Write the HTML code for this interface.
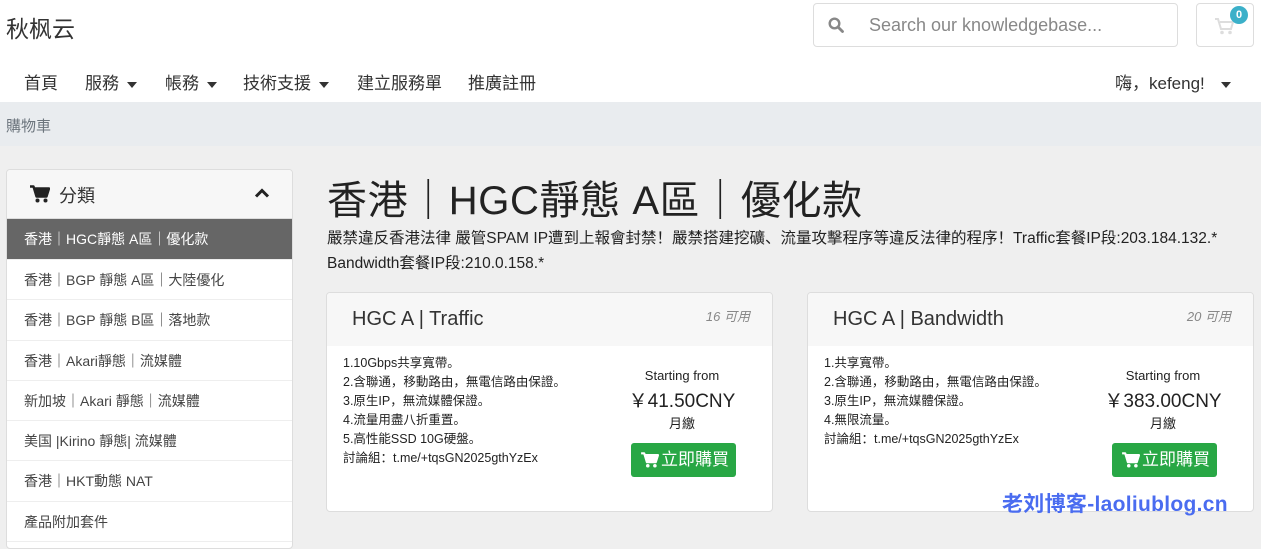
<!DOCTYPE html>
<html><head><meta charset="utf-8"><style>
*{box-sizing:border-box;margin:0;padding:0}
body{width:1261px;height:538px;overflow:hidden;background:#efefef;font-family:"Liberation Sans","Noto Sans CJK SC",sans-serif;color:#333;position:relative}
.abs{position:absolute}
.hdr{left:0;top:0;width:1261px;height:102px;background:#fff}
.logo{left:6px;top:10px;font-size:23px;color:#333}
.search{left:813px;top:3px;width:365px;height:44px;border:1px solid #ddd;border-radius:4px;background:#fff}
.search span{position:absolute;left:55px;top:11px;font-size:18px;color:#888}
.cart{left:1196px;top:3px;width:58px;height:44px;border:1px solid #ddd;border-radius:4px;background:#fff}
.badge{left:1230px;top:6px;width:18px;height:18px;border-radius:9px;background:#3bb0c9;color:#fff;font-size:11px;font-weight:bold;text-align:center;line-height:18px}
.nav{top:69px;font-size:17px;color:#333}
.caret{display:inline-block;width:0;height:0;border-left:5px solid transparent;border-right:5px solid transparent;border-top:6px solid #333;vertical-align:middle;margin-left:8px}
.bc{left:0;top:102px;width:1261px;height:44px;background:#e9ecef}
.bc span{position:absolute;left:6px;top:13px;font-size:15px;color:#6c757d}
.side{left:6px;top:169px;width:287px;height:380px;background:#fff;border:1px solid #ddd;border-radius:4px;overflow:hidden}
.sh{height:49px;background:#f7f7f7;border-bottom:1px solid #ddd;position:relative;font-size:18px}
.si{height:40.3px;border-bottom:1px solid #eee;font-size:14px;padding-left:17px;line-height:40px;color:#444}
.si.act{background:#666;color:#fff;height:41px}
h1{position:absolute;left:327px;top:168px;font-size:40px;letter-spacing:0.6px;font-weight:normal;color:#222;white-space:nowrap}
.desc{left:327px;top:226px;font-size:15.5px;line-height:25px;color:#222;width:925px}
.card{width:447px;height:220px;background:#fff;border:1px solid #ddd;border-radius:4px;top:292px;overflow:hidden}
.ch{height:53px;background:#f7f7f7;position:relative}
.ch .t{position:absolute;left:25px;top:15px;font-size:20px;color:#333}
.ch .q{position:absolute;right:22px;top:13px;font-size:13px;font-style:italic;color:#888}
.feat{position:absolute;left:16px;top:61px;font-size:12.5px;line-height:19px;color:#222}
.pr{position:absolute;left:290px;width:130px;top:75px;text-align:center;color:#222}
.btn{position:absolute;left:304px;top:150px;width:105px;height:34px;background:#28a745;border-radius:3px;color:#fff;font-size:17px;line-height:34px;padding-left:30px}
.btn svg{position:absolute;left:10px;top:9px}
</style></head><body>
<div class="abs hdr"></div>
<div class="abs logo">秋枫云</div>
<div class="abs search"><svg style="position:absolute;left:14px;top:13px" width="16" height="16" viewBox="0 0 16 16"><circle cx="6.5" cy="6.5" r="4.8" fill="none" stroke="#888" stroke-width="2.4"/><path d="M10 10l4.5 4.5" stroke="#888" stroke-width="2.8" stroke-linecap="round"/></svg><span>Search our knowledgebase...</span></div>
<div class="abs cart"><svg style="position:absolute;left:18px;top:14px" width="20" height="17" viewBox="0 0 20 17"><path d="M0 1h3l3 10h10l2-7H5" fill="none" stroke="#ddd" stroke-width="2"/><circle cx="7" cy="14.5" r="1.8" fill="#ddd"/><circle cx="15" cy="14.5" r="1.8" fill="#ddd"/></svg></div>
<div class="abs badge">0</div>
<div class="abs nav" style="left:24px">首頁</div>
<div class="abs nav" style="left:85px">服務<span class="caret"></span></div>
<div class="abs nav" style="left:165px">帳務<span class="caret"></span></div>
<div class="abs nav" style="left:243px">技術支援<span class="caret"></span></div>
<div class="abs nav" style="left:357px">建立服務單</div>
<div class="abs nav" style="left:468px">推廣註冊</div>
<div class="abs nav" style="left:1115px">嗨，kefeng!<span class="caret" style="margin-left:16px"></span></div>
<div class="abs bc"><span>購物車</span></div>
<div class="abs side">
<div class="sh"><svg style="position:absolute;left:23px;top:15px" width="20" height="18" viewBox="0 0 20 18"><path d="M0 1.5h3.5l3 10h10l2.5-8H5" fill="#222" stroke="#222" stroke-width="2.4" stroke-linejoin="round"/><circle cx="7.5" cy="15.5" r="2" fill="#222"/><circle cx="15.5" cy="15.5" r="2" fill="#222"/></svg><span style="position:absolute;left:52px;top:12px">分類</span><svg style="position:absolute;left:247px;top:18px" width="16" height="10" viewBox="0 0 16 10"><path d="M2 8.5L8 2.5l6 6" fill="none" stroke="#222" stroke-width="3"/></svg></div>
<div class="si act">香港｜HGC靜態 A區｜優化款</div>
<div class="si">香港｜BGP 靜態 A區｜大陸優化</div>
<div class="si">香港｜BGP 靜態 B區｜落地款</div>
<div class="si">香港｜Akari靜態｜流媒體</div>
<div class="si">新加坡｜Akari 靜態｜流媒體</div>
<div class="si">美国 |Kirino 靜態| 流媒體</div>
<div class="si">香港｜HKT動態 NAT</div>
<div class="si">產品附加套件</div>
</div>
<h1>香港｜HGC靜態 A區｜優化款</h1>
<div class="abs desc">嚴禁違反香港法律 嚴管SPAM IP遭到上報會封禁！嚴禁搭建挖礦、流量攻擊程序等違反法律的程序！Traffic套餐IP段:203.184.132.* Bandwidth套餐IP段:210.0.158.*</div>
<div class="abs card" style="left:326px">
<div class="ch"><span class="t">HGC A | Traffic</span><span class="q">16 可用</span></div>
<div class="feat">1.10Gbps共享寬帶。<br>2.含聯通，移動路由，無電信路由保證。<br>3.原生IP，無流媒體保證。<br>4.流量用盡八折重置。<br>5.高性能SSD 10G硬盤。<br>討論組：t.me/+tqsGN2025gthYzEx</div>
<div class="pr"><div style="font-size:13px">Starting from</div><div style="font-size:19px;margin-top:3px">￥41.50CNY</div><div style="font-size:13px">月繳</div></div>
<div class="btn"><svg width="18" height="16" viewBox="0 0 20 18"><path d="M0 1.5h3.5l3 10h10l2.5-8H5" fill="#fff" stroke="#fff" stroke-width="2.4" stroke-linejoin="round"/><circle cx="7.5" cy="15.5" r="2" fill="#fff"/><circle cx="15.5" cy="15.5" r="2" fill="#fff"/></svg>立即購買</div>
</div>
<div class="abs card" style="left:807px">
<div class="ch"><span class="t">HGC A | Bandwidth</span><span class="q">20 可用</span></div>
<div class="feat">1.共享寬帶。<br>2.含聯通，移動路由，無電信路由保證。<br>3.原生IP，無流媒體保證。<br>4.無限流量。<br>討論組：t.me/+tqsGN2025gthYzEx</div>
<div class="pr"><div style="font-size:13px">Starting from</div><div style="font-size:19px;margin-top:3px">￥383.00CNY</div><div style="font-size:13px">月繳</div></div>
<div class="btn"><svg width="18" height="16" viewBox="0 0 20 18"><path d="M0 1.5h3.5l3 10h10l2.5-8H5" fill="#fff" stroke="#fff" stroke-width="2.4" stroke-linejoin="round"/><circle cx="7.5" cy="15.5" r="2" fill="#fff"/><circle cx="15.5" cy="15.5" r="2" fill="#fff"/></svg>立即購買</div>
</div>
<div class="abs" style="left:1002px;top:488px;font-size:21px;font-weight:bold;color:#4a6cf0;letter-spacing:0.3px">老刘博客-laoliublog.cn</div>
</body></html>
